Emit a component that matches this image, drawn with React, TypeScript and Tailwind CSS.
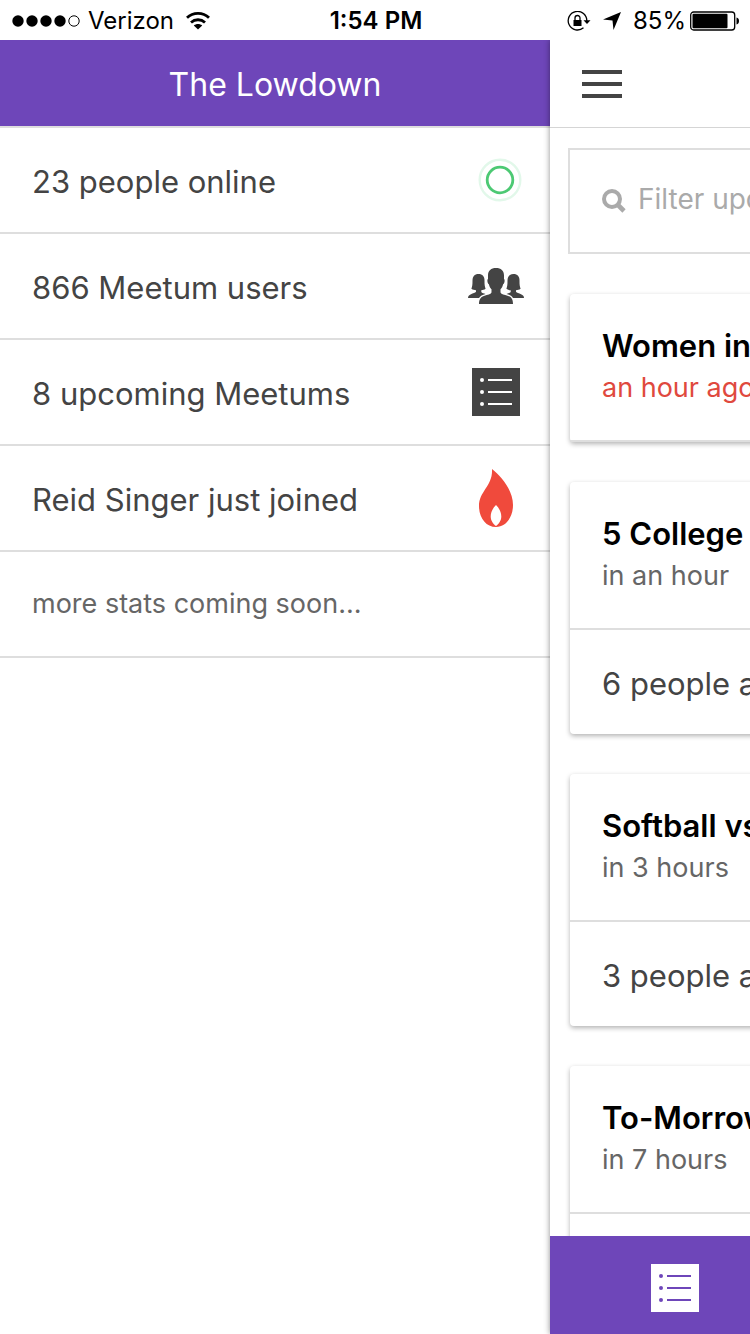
interface IconProps {
  className?: string;
}

interface Meetum {
  title: string;
  time: string;
  past?: boolean;
  people?: string;
}

const meetums: Meetum[] = [
  { title: 'Women in Tech', time: 'an hour ago', past: true },
  { title: '5 College Social', time: 'in an hour', people: '6 people attending' },
  { title: 'Softball vs Smith', time: 'in 3 hours', people: '3 people attending' },
  { title: 'To-Morrow Night', time: 'in 7 hours', people: '2 people attending' },
];

const ListIcon = ({ className }: IconProps) => (
  <svg viewBox="0 0 48 48" className={className} aria-hidden="true">
    <path
      fill="currentColor"
      fillRule="evenodd"
      d="M0 0h48v48H0zM16 11v2h24v-2zM16 23v2h24v-2zM16 35v2h24v-2zM10 10a2 2 0 1 0 0 4 2 2 0 0 0 0-4zM10 22a2 2 0 1 0 0 4 2 2 0 0 0 0-4zM10 34a2 2 0 1 0 0 4 2 2 0 0 0 0-4z"
    />
  </svg>
);

const OnlineIcon = () => (
  <svg viewBox="0 0 44 44" className="w-11 h-11" fill="none" aria-hidden="true">
    <circle cx="22" cy="22" r="20.3" stroke="#e2f8ea" strokeWidth="2.400" />
    <circle cx="22" cy="22" r="12.8" stroke="#4cc973" strokeWidth="2.800" />
  </svg>
);

const PeopleIcon = () => (
  <svg viewBox="0 0 56 36" className="w-14 h-9" fill="#444" aria-hidden="true">
    <path d="M28 0c-5 0-8 2.600-8 7.500v3.500c-1 .3-.8 4.500.9 5.200.5 2.300 1.300 3.800 2.600 5v3.300c-.8 1.800-4 2.300-7 3.200-3.600 1.100-5.500 3.300-5.500 8.300h34c0-5-1.900-7.200-5.500-8.300-3-.9-6.200-1.400-7-3.200v-3.300c1.300-1.200 2.100-2.700 2.600-5 1.700-.7 1.900-4.900.9-5.200V7.500C36 2.600 33 0 28 0z" />
    <path id="side" d="M10.500 6c-4 0-6 2.500-6 6.500 0 4-.2 6-1.100 8.300 1.500 1 3 1.400 4.600 1.500v1.500c-.8 1.200-3 1.500-5 2.400C1 27 0 28 0 30h11c1.200-2.200 3.500-3.300 6.500-4.100-1.600-.6-3.500-1-4.200-2v-1.600c1.500-.1 2.900-.5 4.300-1.500-.9-2.300-1.100-4.300-1.100-8.300 0-4-2-6.500-6-6.500z" />
    <use href="#side" transform="translate(56 0) scale(-1 1)" />
  </svg>
);

const FlameIcon = () => (
  <svg viewBox="0 0 36 58" className="w-9 h-[58px]" fill="#f04a3c" aria-hidden="true">
    <path
      fillRule="evenodd"
      d="M14 0c9 7 21 21 21 36 0 12-7 22-17 22S1 49 1 37C1 22 15 17 14 0zM18 36c-3 3-5.300 7-5.300 11.500 0 4 2.500 7.500 5.300 9.500 2.800-2 5.300-5.500 5.300-9.500C23.300 43 21 39 18 36z"
    />
  </svg>
);

const SearchIcon = () => (
  <svg viewBox="0 0 24 24" className="w-6 h-6 shrink-0" fill="none" stroke="#aaa" aria-hidden="true">
    <circle cx="10" cy="10" r="8" strokeWidth="4" />
    <path d="M15.500 15.500l6.500 6.500" strokeWidth="4.600" />
  </svg>
);

const WifiIcon = () => (
  <svg viewBox="0 0 24 18" className="w-6 h-[18px]" fill="none" stroke="#000" strokeWidth="2.800" aria-hidden="true">
    <path d="M1 5.800C7 0 17 0 23 5.800M5 10.500c4-3.700 10-3.700 14 0" />
    <path d="M12 17.500l-4.200-4.100c2.400-2 6-2 8.400 0z" fill="#000" stroke="none" />
  </svg>
);

const RotationLockIcon = () => (
  <svg viewBox="0 0 24 20" className="w-6 h-5" fill="none" stroke="#000" aria-hidden="true">
    <path d="M16.500 16.800A9.300 9.300 0 1 1 19.800 10" strokeWidth="1.300" />
    <path d="M16.500 9.200h7L20 13z" fill="#000" stroke="none" />
    <path d="M6.500 9h8v6h-8z" fill="#000" stroke="none" />
    <path d="M8 9.500V7a2.500 2.500 0 0 1 5 0v2.500" strokeWidth="1.300" />
  </svg>
);

const LocationIcon = () => (
  <svg viewBox="0 0 18 18" className="w-[18px] h-[18px]" aria-hidden="true">
    <path d="M18 0L10.500 18 9.500 8.500 0 7.500z" />
  </svg>
);

const BatteryIcon = () => (
  <svg viewBox="0 0 50 20" className="w-[50px] h-5" aria-hidden="true">
    <rect x=".7" y="1" width="44" height="18" rx="3" fill="none" stroke="#000" strokeWidth="1.300" />
    <rect x="2.500" y="2.800" width="35" height="14.400" rx="1" />
    <path d="M46.500 6.500c1.800.5 2.500 1.800 2.500 3.500s-.7 3-2.500 3.500z" />
  </svg>
);

const StatusBar = () => (
  <div className="relative z-10 h-10 shrink-0 grid grid-cols-[1fr_auto_1fr] items-center pt-0.5 pl-3 pr-2.5 bg-white text-2xl text-black">
    <div className="flex items-center gap-2">
      <svg viewBox="0 0 68 12" className="w-[68px] h-3" aria-hidden="true">
        <circle cx="6" cy="6" r="5.700" />
        <circle cx="20" cy="6" r="5.700" />
        <circle cx="34" cy="6" r="5.700" />
        <circle cx="48" cy="6" r="5.700" />
        <circle cx="62" cy="6" r="5.200" fill="none" stroke="#000" />
      </svg>
      <span>Verizon</span>
      <span className="pl-1"><WifiIcon /></span>
    </div>
    <span className="font-semibold">1:54 PM</span>
    <div className="flex items-center justify-end gap-3">
      <RotationLockIcon />
      <LocationIcon />
      <div className="flex items-center gap-1">
        <span>85%</span>
        <BatteryIcon />
      </div>
    </div>
  </div>
);

const MeetumCard = ({ meetum }: { meetum: Meetum }) => (
  <article className="mt-10 mx-5 rounded-sm bg-white shadow-[0_2px_5px_rgba(0,0,0,0.3)]">
    <div className="px-8 py-8 h-[148px] border-b-2 border-[#dedede]">
      <h2 className="text-[31px] leading-10 font-semibold text-black">{meetum.title}</h2>
      <p className={`text-[27px] leading-[44px] ${meetum.past ? 'text-[#e0493e]' : 'text-[#666]'}`}>
        {meetum.time}
      </p>
    </div>
    {meetum.people && (
      <p className="px-8 pt-1 h-[104px] flex items-center text-[31px] text-[#444]">{meetum.people}</p>
    )}
  </article>
);

export default function App() {
  return (
    <div className="h-screen flex flex-col overflow-hidden bg-white font-['Inter',sans-serif]">
      <StatusBar />

      <div className="flex-1 min-h-0 flex">
        {/* Side menu */}
        <aside className="flex-1 min-w-0 text-[31px] text-[#444]">
          <h1 className="h-[88px] pt-1 flex items-center justify-center bg-[#6e46b9] border-b-2 border-[#dedede] text-[32px] text-white">
            The Lowdown
          </h1>
          <ul>
            <li className="h-[106px] pl-8 pr-7 flex items-center justify-between border-b-2 border-[#dedede]">
              <span className="pt-1">23 people online</span>
              <OnlineIcon />
            </li>
            <li className="h-[106px] pl-8 pr-[26px] flex items-center justify-between border-b-2 border-[#dedede]">
              <span className="pt-1">866 Meetum users</span>
              <PeopleIcon />
            </li>
            <li className="h-[106px] pl-8 pr-[30px] flex items-center justify-between border-b-2 border-[#dedede]">
              <span className="pt-1">8 upcoming Meetums</span>
              <ListIcon className="w-12 h-12" />
            </li>
            <li className="h-[106px] pl-8 pr-9 flex items-center justify-between border-b-2 border-[#dedede]">
              <span className="pt-1">Reid Singer just joined</span>
              <FlameIcon />
            </li>
            <li className="h-[106px] px-8 flex items-center border-b-2 border-[#dedede] text-[27px] text-[#666]">
              more stats coming soon...
            </li>
          </ul>
        </aside>

        {/* Main screen, pushed to the right while the menu is open */}
        <main className="relative w-[200px] shrink-0 overflow-hidden bg-white shadow-[0_0_6px_rgba(0,0,0,0.45)]">
          <div className="w-screen h-full flex flex-col">
            <header className="h-[88px] shrink-0 px-8 flex items-center border-b border-[#d5d5d5]">
              <button type="button" aria-label="Menu" className="flex flex-col gap-2">
                <span className="w-10 h-1 bg-[#444]" />
                <span className="w-10 h-1 bg-[#444]" />
                <span className="w-10 h-1 bg-[#444]" />
              </button>
            </header>

            <div className="flex-1 min-h-0 overflow-hidden">
              <label className="mt-5 mx-[18px] h-[106px] px-8 flex items-center gap-3 border-2 border-[#dedede]">
                <SearchIcon />
                <input
                  type="text"
                  aria-label="Filter meetums"
                  placeholder="Filter upcoming Meetums"
                  className="flex-1 min-w-0 pb-1 text-[28px] text-[#444] outline-none placeholder:text-[#aaa]"
                />
              </label>
              {meetums.map((meetum) => (
                <MeetumCard key={meetum.title} meetum={meetum} />
              ))}
            </div>

            <nav className="h-[98px] shrink-0 grid grid-cols-3 bg-[#6e46b9] text-white">
              <button type="button" aria-label="Meetums" className="flex items-center justify-center pt-1.5">
                <ListIcon className="w-12 h-12" />
              </button>
            </nav>
          </div>
        </main>
      </div>
    </div>
  );
}
